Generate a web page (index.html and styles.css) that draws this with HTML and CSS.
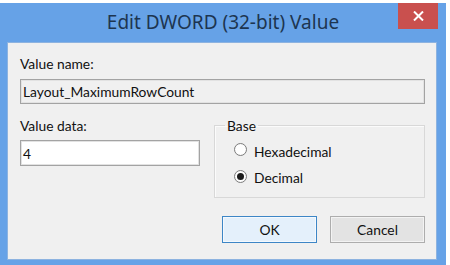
FILE: index.html
```html
<!DOCTYPE html>
<html>
<head>
<meta charset="utf-8">
<link rel="stylesheet" href="styles.css">
</head>
<body>
<div class="window">
  <div class="titlebar">
    <span class="title">Edit DWORD (32-bit) Value</span>
    <div class="close">
      <svg width="11" height="10" viewBox="0 0 11 10"><path d="M1 0.5 L10 9.5 M10 0.5 L1 9.5" stroke="#fff" stroke-width="2" fill="none"/></svg>
    </div>
  </div>
  <div class="client">
    <div class="lbl">Value name:</div>
    <div class="field ro">Layout_MaximumRowCount</div>
    <div class="row">
      <div class="col">
        <div class="lbl">Value data:</div>
        <div class="field small">4</div>
      </div>
      <fieldset class="group">
        <legend>Base</legend>
        <div class="radio"><span class="dot"></span><span>Hexadecimal</span></div>
        <div class="radio"><span class="dot on"></span><span>Decimal</span></div>
      </fieldset>
    </div>
    <div class="buttons">
      <div class="btn default">OK</div>
      <div class="btn">Cancel</div>
    </div>
  </div>
</div>
</body>
</html>
```
FILE: styles.css
```css
html, body {
  margin: 0;
  padding: 0;
  background: #ffffff;
  width: 450px;
  height: 265px;
  overflow: hidden;
}
body {
  font-family: "Lato", "Noto Sans", sans-serif;
  font-size: 13.8px;
  line-height: 17px;
  color: #111;
}
.window {
  margin-top: 3px;
  width: 446px;
  height: 262px;
  box-sizing: border-box;
  background: #66a2e7;
  padding: 0 9px 5px 7px;
  display: flex;
  flex-direction: column;
}
.titlebar {
  height: 39px;
  display: flex;
  align-items: center;
  justify-content: center;
  position: relative;
}
.title {
  font-family: "Noto Sans", sans-serif;
  font-size: 19px;
  color: #1d3550;
  margin-left: 2px;
}
.close {
  position: absolute;
  top: 0;
  right: -1px;
  width: 40px;
  height: 26px;
  background: #c9504e;
  display: flex;
  align-items: center;
  justify-content: center;
}
.client {
  flex: 1;
  background: #f0f0f0;
  border: 1px solid #8db3e0;
  padding: 12px 11px 0 12px;
  display: flex;
  flex-direction: column;
}
.lbl {
  height: 17px;
}
.field {
  margin-top: 7px;
  height: 25px;
  box-sizing: border-box;
  border: 1px solid #a3a3a3;
  box-shadow: inset 0 0 0 1px #e2e2e2;
  background: #fff;
  padding: 0 2px;
  display: flex;
  align-items: center;
}
.field.ro {
  background: #f0f0f0;
}
.field.small {
  margin-top: 6px;
  width: 180px;
  height: 26px;
}
.row {
  margin-top: 13px;
  display: flex;
  gap: 14px;
  align-items: flex-start;
}
.col {
  display: flex;
  flex-direction: column;
}
.group {
  margin: 0;
  width: 211px;
  height: 81px;
  box-sizing: border-box;
  border: 1px solid #d8d8d8;
  box-shadow: inset 1px 1px 0 #fbfbfb;
  padding: 9px 0 0 19px;
  min-inline-size: 0;
}
.group legend {
  padding: 0 2px;
  margin-left: -9px;
  line-height: 17px;
}
.radio {
  display: flex;
  align-items: flex-start;
  gap: 7px;
  height: 26px;
}
.dot {
  width: 13px;
  height: 13px;
  box-sizing: border-box;
  border-radius: 50%;
  border: 1px solid #7d7d7d;
  background: radial-gradient(circle, #ffffff 55%, #ececec 100%);
  display: flex;
  align-items: center;
  justify-content: center;
  margin-top: 0;
}
.dot.on::after {
  content: "";
  width: 7px;
  height: 7px;
  border-radius: 50%;
  background: #1c1c1c;
}
.radio:nth-child(3) .dot {
  margin-top: 1px;
}
.buttons {
  margin-top: 18px;
  display: flex;
  justify-content: flex-end;
  gap: 13px;
}
.btn {
  width: 95px;
  height: 27px;
  box-sizing: border-box;
  border: 1px solid #adadad;
  background: #e3e3e3;
  box-shadow: inset 0 0 0 1px #f3f3f3;
  display: flex;
  align-items: center;
  justify-content: center;
}
.btn.default {
  border-color: #3d86c6;
  background: #e4f0fb;
  box-shadow: inset 0 0 0 1px #f4f9fe;
}
```
